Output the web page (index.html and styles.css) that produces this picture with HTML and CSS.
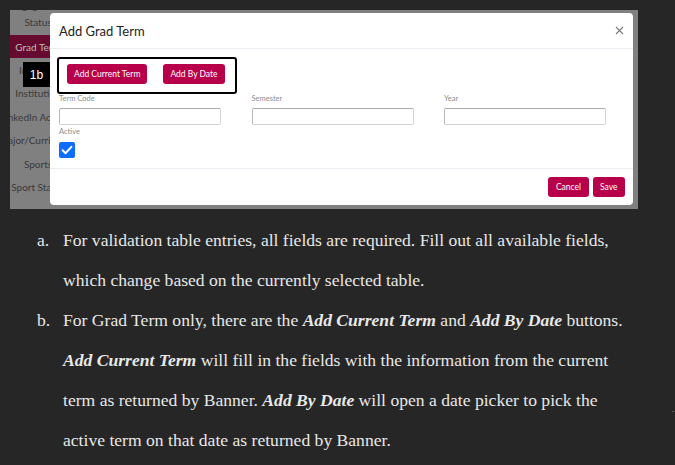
FILE: index.html
```html
<!DOCTYPE html>
<html>
<head>
<meta charset="utf-8">
<link rel="stylesheet" href="styles.css">
</head>
<body>
<div class="shot">
  <div class="sidebar">
    <div class="nav-item nav-first"><span>Engagement</span><span>Status</span></div>
    <div class="nav-item nav-active">Grad Term</div>
    <div class="nav-item">Interests</div>
    <div class="nav-item">Institution</div>
    <div class="nav-item">LinkedIn Account</div>
    <div class="nav-item">Major/Curriculum</div>
    <div class="nav-item">Sports</div>
    <div class="nav-item">Sport Status</div>
  </div>
  <div class="badge">1b</div>
  <div class="modal">
    <div class="modal-header">
      <span class="modal-title">Add Grad Term</span>
      <svg class="close" width="9" height="9" viewBox="0 0 9 9"><path d="M1 1L8 8M8 1L1 8" stroke="#7a7a7a" stroke-width="1.1" fill="none"/></svg>
    </div>
    <div class="modal-body">
      <div class="term-actions">
        <button class="btn">Add Current Term</button>
        <button class="btn">Add By Date</button>
      </div>
      <div class="fields">
        <div class="field"><label class="lbl">Term Code</label><div class="input"></div></div>
        <div class="field"><label class="lbl">Semester</label><div class="input"></div></div>
        <div class="field"><label class="lbl">Year</label><div class="input"></div></div>
      </div>
      <div class="lbl lbl-active">Active</div>
      <div class="check">
        <svg width="16" height="16" viewBox="0 0 16 16"><path d="M3.6 8.3L6.6 11.2L12.4 4.8" stroke="#fff" stroke-width="2" fill="none" stroke-linecap="round" stroke-linejoin="round"/></svg>
      </div>
      <div class="highlight"></div>
    </div>
    <div class="modal-footer">
      <button class="btn">Cancel</button>
      <button class="btn">Save</button>
    </div>
  </div>
</div>

<div class="doc">
  <div class="item">
    <span class="marker">a.</span>
    <p class="para">For validation table entries, all fields are required. Fill out all available fields,<br>which change based on the currently selected table.</p>
  </div>
  <div class="item">
    <span class="marker">b.</span>
    <p class="para">For Grad Term only, there are the <b><i>Add Current Term</i></b> and <b><i>Add By Date</i></b> buttons.<br><b><i>Add Current Term</i></b> will fill in the fields with the information from the current<br>term as returned by Banner. <b><i>Add By Date</i></b> will open a date picker to pick the<br>active term on that date as returned by Banner.</p>
  </div>
  <span class="stray">.</span>
</div>
</body>
</html>
```

FILE: styles.css
```css
* { box-sizing: border-box; }

html, body {
  margin: 0;
  padding: 0;
  background: #262626;
}

body {
  width: 675px;
  height: 465px;
  overflow: hidden;
  position: relative;
  font-family: "Liberation Serif", "Times New Roman", serif;
}

/* ---------- embedded screenshot ---------- */
.shot {
  margin: 10px 0 0 10px;
  width: 628px;
  height: 199px;
  background: #808080;
  position: relative;
  overflow: hidden;
  font-family: Lato, "Open Sans", sans-serif;
}

.sidebar {
  width: 56px;
  margin-top: -14px;
  display: flex;
  flex-direction: column;
}

.nav-item {
  height: 23.4px;
  display: flex;
  align-items: center;
  justify-content: center;
  white-space: nowrap;
  font-size: 10px;
  color: #3a3a3a;
}

.nav-first {
  height: 39px;
  flex-direction: column;
  line-height: 17px;
  padding-bottom: 4px;
}

.nav-active {
  background: #660b2f;
  color: #bdbdbd;
}

.badge {
  position: absolute;
  left: 13px;
  top: 52px;
  width: 27px;
  height: 25px;
  background: #000;
  color: #fff;
  font-family: "Liberation Sans", Arial, sans-serif;
  font-size: 12px;
  display: flex;
  align-items: center;
  justify-content: center;
}

.modal {
  position: absolute;
  left: 40px;
  top: 3px;
  width: 583px;
  height: 192px;
  background: #fff;
  border-radius: 4px;
  display: flex;
  flex-direction: column;
}

.modal-header {
  height: 36px;
  padding: 0 9px;
  border-bottom: 1px solid #eceef3;
  display: flex;
  align-items: center;
  justify-content: space-between;
}

.modal-title {
  font-size: 13px;
  color: #222;
}

.modal-body {
  position: relative;
  height: 120px;
  padding: 15px 9px 0 9px;
  border-bottom: 1px solid #eceef3;
}

.term-actions {
  display: flex;
  gap: 16px;
  margin-left: 8px;
}

.btn {
  height: 20px;
  padding: 0 7px;
  border: none;
  border-radius: 3px;
  background: #b8004a;
  color: #fff;
  font-family: Lato, "Open Sans", sans-serif;
  font-size: 8.5px;
  line-height: 20px;
}

.fields {
  margin-top: 10px;
  display: grid;
  grid-template-columns: 162px 162px 162px;
  column-gap: 30.5px;
}

.field {
  display: flex;
  flex-direction: column;
}

.lbl {
  font-size: 7.5px;
  line-height: 9px;
  color: #8d8d8d;
}

.input {
  margin-top: 5px;
  height: 17px;
  border: 1px solid #d3d3d3;
  border-top-color: #a8a8a8;
  border-left-color: #b8b8b8;
  border-radius: 2px;
}

.lbl-active {
  margin-top: 2px;
}

.check {
  margin-top: 6px;
  width: 16px;
  height: 16px;
  border-radius: 2px;
  background: #0d6efd;
}

.check svg { display: block; }

.highlight {
  position: absolute;
  left: 7px;
  top: 8px;
  width: 180px;
  height: 37px;
  border: 2.5px solid #000;
  border-radius: 3px;
}

.modal-footer {
  flex: 1;
  display: flex;
  justify-content: flex-end;
  align-items: center;
  gap: 4px;
  padding: 0 8px 0 0;
}

.modal-footer .btn { padding: 0 7.5px; }

/* ---------- document text ---------- */
.doc {
  margin: 11px 0 0 37px;
  color: #e8e8e8;
  font-size: 17.6px;
  line-height: 40px;
}

.item {
  display: flex;
}

.marker {
  width: 26px;
  flex: none;
}

.para {
  margin: 0;
  white-space: nowrap;
}

.stray {
  position: absolute;
  left: 672px;
  top: 405px;
  font-size: 8px;
  line-height: 10px;
  color: #bbb;
}
```
